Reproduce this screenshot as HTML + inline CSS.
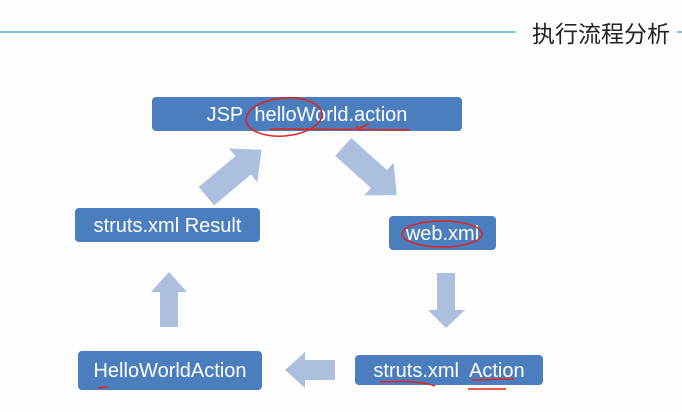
<!DOCTYPE html>
<html><head><meta charset="utf-8"><style>
html,body{margin:0;padding:0;}
body{width:682px;height:412px;background:#fdfdfd;position:relative;overflow:hidden;font-family:"Liberation Sans",sans-serif;}
.b{position:absolute;background:#4a7ebf;border-radius:4px;color:#fff;font-size:20px;display:flex;align-items:center;justify-content:center;white-space:nowrap;padding-top:2px;box-sizing:border-box;}
.t{position:absolute;left:532px;top:15px;font-size:23px;color:#222;font-family:"Liberation Sans","Noto Sans CJK SC",sans-serif;}
</style></head><body>
<div style="position:absolute;left:0;top:31px;width:516px;height:2px;background:#7fc4ea"></div>
<div style="position:absolute;left:677px;top:31px;width:5px;height:2px;background:#7fc4ea"></div>
<div class="t">执行流程分析</div>
<svg width="682" height="412" style="position:absolute;left:0;top:0">
<g fill="#adbfdf">
<polygon points="285,370 305,352 305,360 335,360 335,380 305,380 305,388"/>
<polygon points="169,272 187,292 178,292 178,327 160,327 160,292 151,292"/>
<polygon points="446,328 465,310 455,310 455,273 437,273 437,310 428,310"/>
<g transform="translate(234,173) rotate(-40)"><polygon points="36,0 12,-22 12,-12 -36,-12 -36,12 12,12 12,22"/></g>
<g transform="translate(370,171) rotate(42)"><polygon points="36,0 12,-22 12,-12 -36,-12 -36,12 12,12 12,22"/></g>
</g>
</svg>
<div class="b" style="left:152px;top:97px;width:310px;height:34px">JSP&nbsp; helloWorld.action</div>
<div class="b" style="left:75px;top:208px;width:185px;height:34px">struts.xml Result</div>
<div class="b" style="left:389px;top:216px;width:107px;height:34px">web.xml</div>
<div class="b" style="left:78px;top:351px;width:184px;height:39px">HelloWorldAction</div>
<div class="b" style="left:355px;top:355px;width:188px;height:30px">struts.xml&nbsp; Action</div>
<svg width="682" height="412" style="position:absolute;left:0;top:0" fill="none" stroke="#e0231c" stroke-width="1.5">
<ellipse cx="284" cy="117" rx="38" ry="19" transform="rotate(-5 284 117)"/>
<path d="M270 129 L410 130"/>
<path d="M356 126 q3 4 8 0 l5 -2"/>
<ellipse cx="442" cy="234" rx="40" ry="13"/>
<path d="M380 382 q40 -2 55 4 M472 380 l42 -1 M468 389 l38 0 M98 388 l10 -1"/>
</svg>
</body></html>
